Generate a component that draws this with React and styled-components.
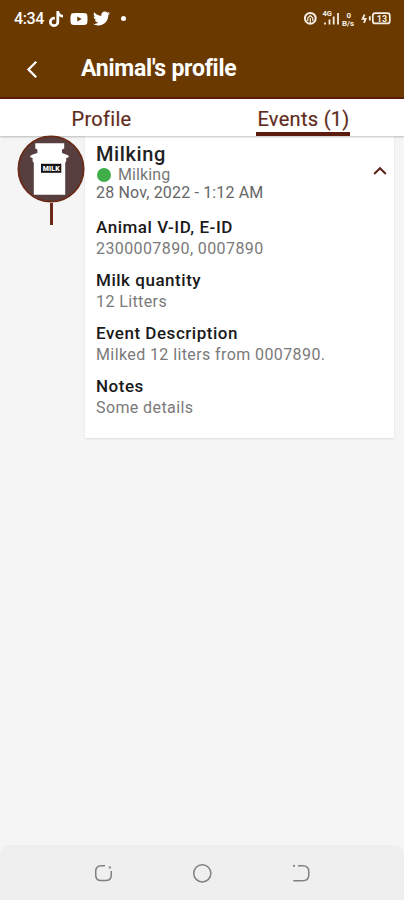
import styled, { createGlobalStyle } from 'styled-components';
import { FaTiktok, FaTwitter, FaYoutube } from 'react-icons/fa';

const details = [
  { id: 1, label: 'Animal V-ID, E-ID', value: '2300007890, 0007890' },
  { id: 2, label: 'Milk quantity', value: '12 Litters' },
  { id: 3, label: 'Event Description', value: 'Milked 12 liters from 0007890.' },
  { id: 4, label: 'Notes', value: 'Some details' },
];

const StatusIcons = () => {
  return (
    <svg width='90' height='24' viewBox='302 7 90 24' fill='none' stroke='#f6eee5'>
      <circle cx='310.3' cy='18.3' r='5.4' strokeWidth='2' />
      <path d='M307.8 21v-3l2.5-2.4 2.5 2.4v3M310.3 18v5' strokeWidth='1.2' />
      <path d='M325 24.5v-2M329.5 24.5v-5M333.7 24.5v-8M338 24.5V13' strokeWidth='1.8' />
      <path d='M364.6 14.5l-2 4.4h3l-1.6 4' strokeWidth='1.8' />
      <rect x='372.8' y='13.2' width='17' height='10.2' rx='2.5' strokeWidth='1.7' />
      <path d='M369.8 16.2v4.2' strokeWidth='1.8' />
      <g fill='#f6eee5' stroke='none' fontFamily='Roboto, sans-serif' fontWeight='700'>
        <text x='322.5' y='15.5' fontSize='7.5'>4G</text>
        <text x='346.5' y='17.5' fontSize='8'>0</text>
        <text x='342' y='26.3' fontSize='8'>B/s</text>
        <text x='376.8' y='21.7' fontSize='9'>13</text>
      </g>
    </svg>
  );
};

const MilkCan = () => {
  return (
    <svg width='68' height='68' viewBox='0 0 68 68'>
      <circle cx='34' cy='34' r='32.6' fill='#573f40' stroke='#6b2a17' strokeWidth='1.8' />
      <path
        d='M18.3 8.3h28.9v5.2l-2.2 1v3.6l4.2 1.4 2.8 1.5-.8 1.6-2 .5v3.2l-1 1.5V59.7H16.8V27.8l-1.2-1.5v-3.2l-1.8-.5-.8-1.6 2.8-1.5 4.6-1.4v-3.6l-2.1-1z'
        fill='#fff'
      />
      <rect x='24' y='28.8' width='20.3' height='9' fill='#161213' />
      <text x='34.2' y='35.8' fill='#fff' fontFamily='Roboto, sans-serif' fontSize='7' fontWeight='900' textAnchor='middle' textLength='17'>
        MILK
      </text>
    </svg>
  );
};

const App = () => {
  return (
    <Screen>
      <GlobalStyle />
      <StatusBar>
        <Clock>4:34</Clock>
        <FaTiktok size={16} />
        <FaYoutube size={18} />
        <FaTwitter size={17} />
        <Dot />
        <StatusIcons />
      </StatusBar>
      <Header>
        <svg width='12' height='18' viewBox='0 0 12 18' fill='none' stroke='#fff' strokeWidth='2.3'>
          <path d='M10.2 1.8L2.5 9.5l7.7 7.7' />
        </svg>
        <h1>Animal's profile</h1>
      </Header>
      <Tabs>
        <Tab>
          <span>Profile</span>
        </Tab>
        <Tab $active>
          <span>Events (1)</span>
        </Tab>
      </Tabs>
      <Timeline>
        <Marker>
          <MilkCan />
          <Stem />
        </Marker>
        <Card>
          <CardHead>
            <div>
              <Title>Milking</Title>
              <Kind>
                <KindDot />
                Milking
              </Kind>
              <When>28 Nov, 2022 - 1:12 AM</When>
            </div>
            <svg width='14' height='10' viewBox='0 0 14 10' fill='none' stroke='#5c2218' strokeWidth='2'>
              <path d='M1.2 8L7 2.2 12.8 8' />
            </svg>
          </CardHead>
          {details.map(({ id, label, value }) => (
            <Detail key={id}>
              <Label>{label}</Label>
              <Value>{value}</Value>
            </Detail>
          ))}
        </Card>
      </Timeline>
      <NavBar>
        <svg width='20' height='20' viewBox='0 0 20 20'>
          <path d='M12 2.7H8.5Q2.7 2.7 2.7 8.5v3.2Q2.7 17.5 8 17.5h4.5q5.8 0 5.8-5.8V8' />
          <circle cx='16.8' cy='4.5' r='.4' />
        </svg>
        <svg width='20' height='20' viewBox='0 0 20 20'>
          <circle cx='10.3' cy='10.3' r='8.6' />
        </svg>
        <svg width='20' height='20' viewBox='0 0 20 20'>
          <path d='M7 2.7h4.5q6.3 0 6.3 6v3q0 6-6.3 6H2.3' />
          <circle cx='3' cy='2.9' r='.4' />
        </svg>
      </NavBar>
    </Screen>
  );
};
export default App;

const GlobalStyle = createGlobalStyle`
  * {
    box-sizing: border-box;
  }
  body {
    margin: 0;
    font-family: Roboto, sans-serif;
  }
  svg {
    display: block;
    flex-shrink: 0;
  }
`;

const Screen = styled.div`
  display: flex;
  flex-direction: column;
  width: 404px;
  height: 900px;
  background: #f5f5f5;
`;

const StatusBar = styled.div`
  display: flex;
  align-items: center;
  height: 38px;
  padding: 0 12px 1px 14px;
  background: #6a3900;
  color: #fff;
  > svg:nth-of-type(2) {
    margin-left: 6px;
  }
  > svg:nth-of-type(3) {
    margin-left: 5px;
  }
  > svg:last-child {
    margin-left: auto;
  }
`;

const Clock = styled.span`
  margin-right: 3px;
  width: 31px;
  font-size: 16px;
  font-weight: 500;
  letter-spacing: -0.4px;
`;

const Dot = styled.i`
  width: 5px;
  height: 5px;
  margin-left: 11px;
  border-radius: 50%;
  background: #fff;
`;

const Header = styled.header`
  display: flex;
  align-items: center;
  height: 61px;
  padding: 2px 0 0 26px;
  border-bottom: 2px solid #5c1c0a;
  background: #6a3900;
  color: #fff;
  h1 {
    margin: 0 0 0 43px;
    font-size: 23px;
    font-weight: 700;
    letter-spacing: -0.25px;
  }
`;

const Tabs = styled.nav`
  position: relative;
  display: grid;
  grid-template-columns: 1fr 1fr;
  height: 37px;
  background: #fff;
  box-shadow: 0 1px 2px rgba(0, 0, 0, 0.25);
`;

const Tab = styled.div`
  display: flex;
  justify-content: center;
  span {
    height: 37px;
    padding: 0 0 0 1px;
    border-bottom: 4px solid ${({ $active }) => ($active ? '#5c1c10' : 'transparent')};
    color: #5f2c1c;
    font-size: 20px;
    line-height: 41px;
    letter-spacing: 0.3px;
    -webkit-text-stroke: 0.2px #5f2c1c;
    white-space: nowrap;
  }
`;

const Timeline = styled.main`
  display: flex;
  flex: 1;
  align-items: flex-start;
`;

const Marker = styled.div`
  position: relative;
  display: flex;
  flex-direction: column;
  align-items: center;
  width: 85px;
  padding-left: 17px;
  margin-top: -1px;
`;

const Stem = styled.div`
  width: 3px;
  height: 22px;
  background: #6b2a17;
`;

const Card = styled.article`
  width: 309px;
  height: 302px;
  padding: 6px 7px 0 11px;
  background: #fff;
  box-shadow: 0 1px 2px rgba(0, 0, 0, 0.1);
`;

const CardHead = styled.div`
  display: flex;
  justify-content: space-between;
  height: 75px;
  > svg {
    margin-top: 24px;
  }
`;

const Title = styled.div`
  color: #222;
  font-size: 20px;
  line-height: 24px;
  font-weight: 500;
  letter-spacing: 0.6px;
`;

const Kind = styled.div`
  display: flex;
  align-items: center;
  gap: 7px;
  height: 17px;
  color: #777;
  font-size: 16px;
  line-height: 17px;
  letter-spacing: 0.1px;
`;

const KindDot = styled.i`
  width: 14px;
  height: 14px;
  margin-left: 1px;
  border-radius: 50%;
  background: #3fae49;
`;

const When = styled.div`
  color: #666;
  font-size: 16px;
  line-height: 19px;
  letter-spacing: 0.16px;
  white-space: nowrap;
`;

const Detail = styled.section`
  height: 53px;
  white-space: nowrap;
`;

const Label = styled.div`
  color: #1a1a1a;
  font-size: 17px;
  font-weight: 500;
  line-height: 21px;
  letter-spacing: 0.53px;
`;

const Value = styled.div`
  color: #7a7a7a;
  font-size: 16px;
  line-height: 22px;
  letter-spacing: 0.4px;
`;

const NavBar = styled.footer`
  display: flex;
  justify-content: center;
  gap: 79px;
  height: 55px;
  padding-top: 18px;
  border-radius: 9px 9px 0 0;
  background: #efefef;
  svg {
    fill: none;
    stroke: #808080;
    stroke-width: 1.5;
  }
`;
